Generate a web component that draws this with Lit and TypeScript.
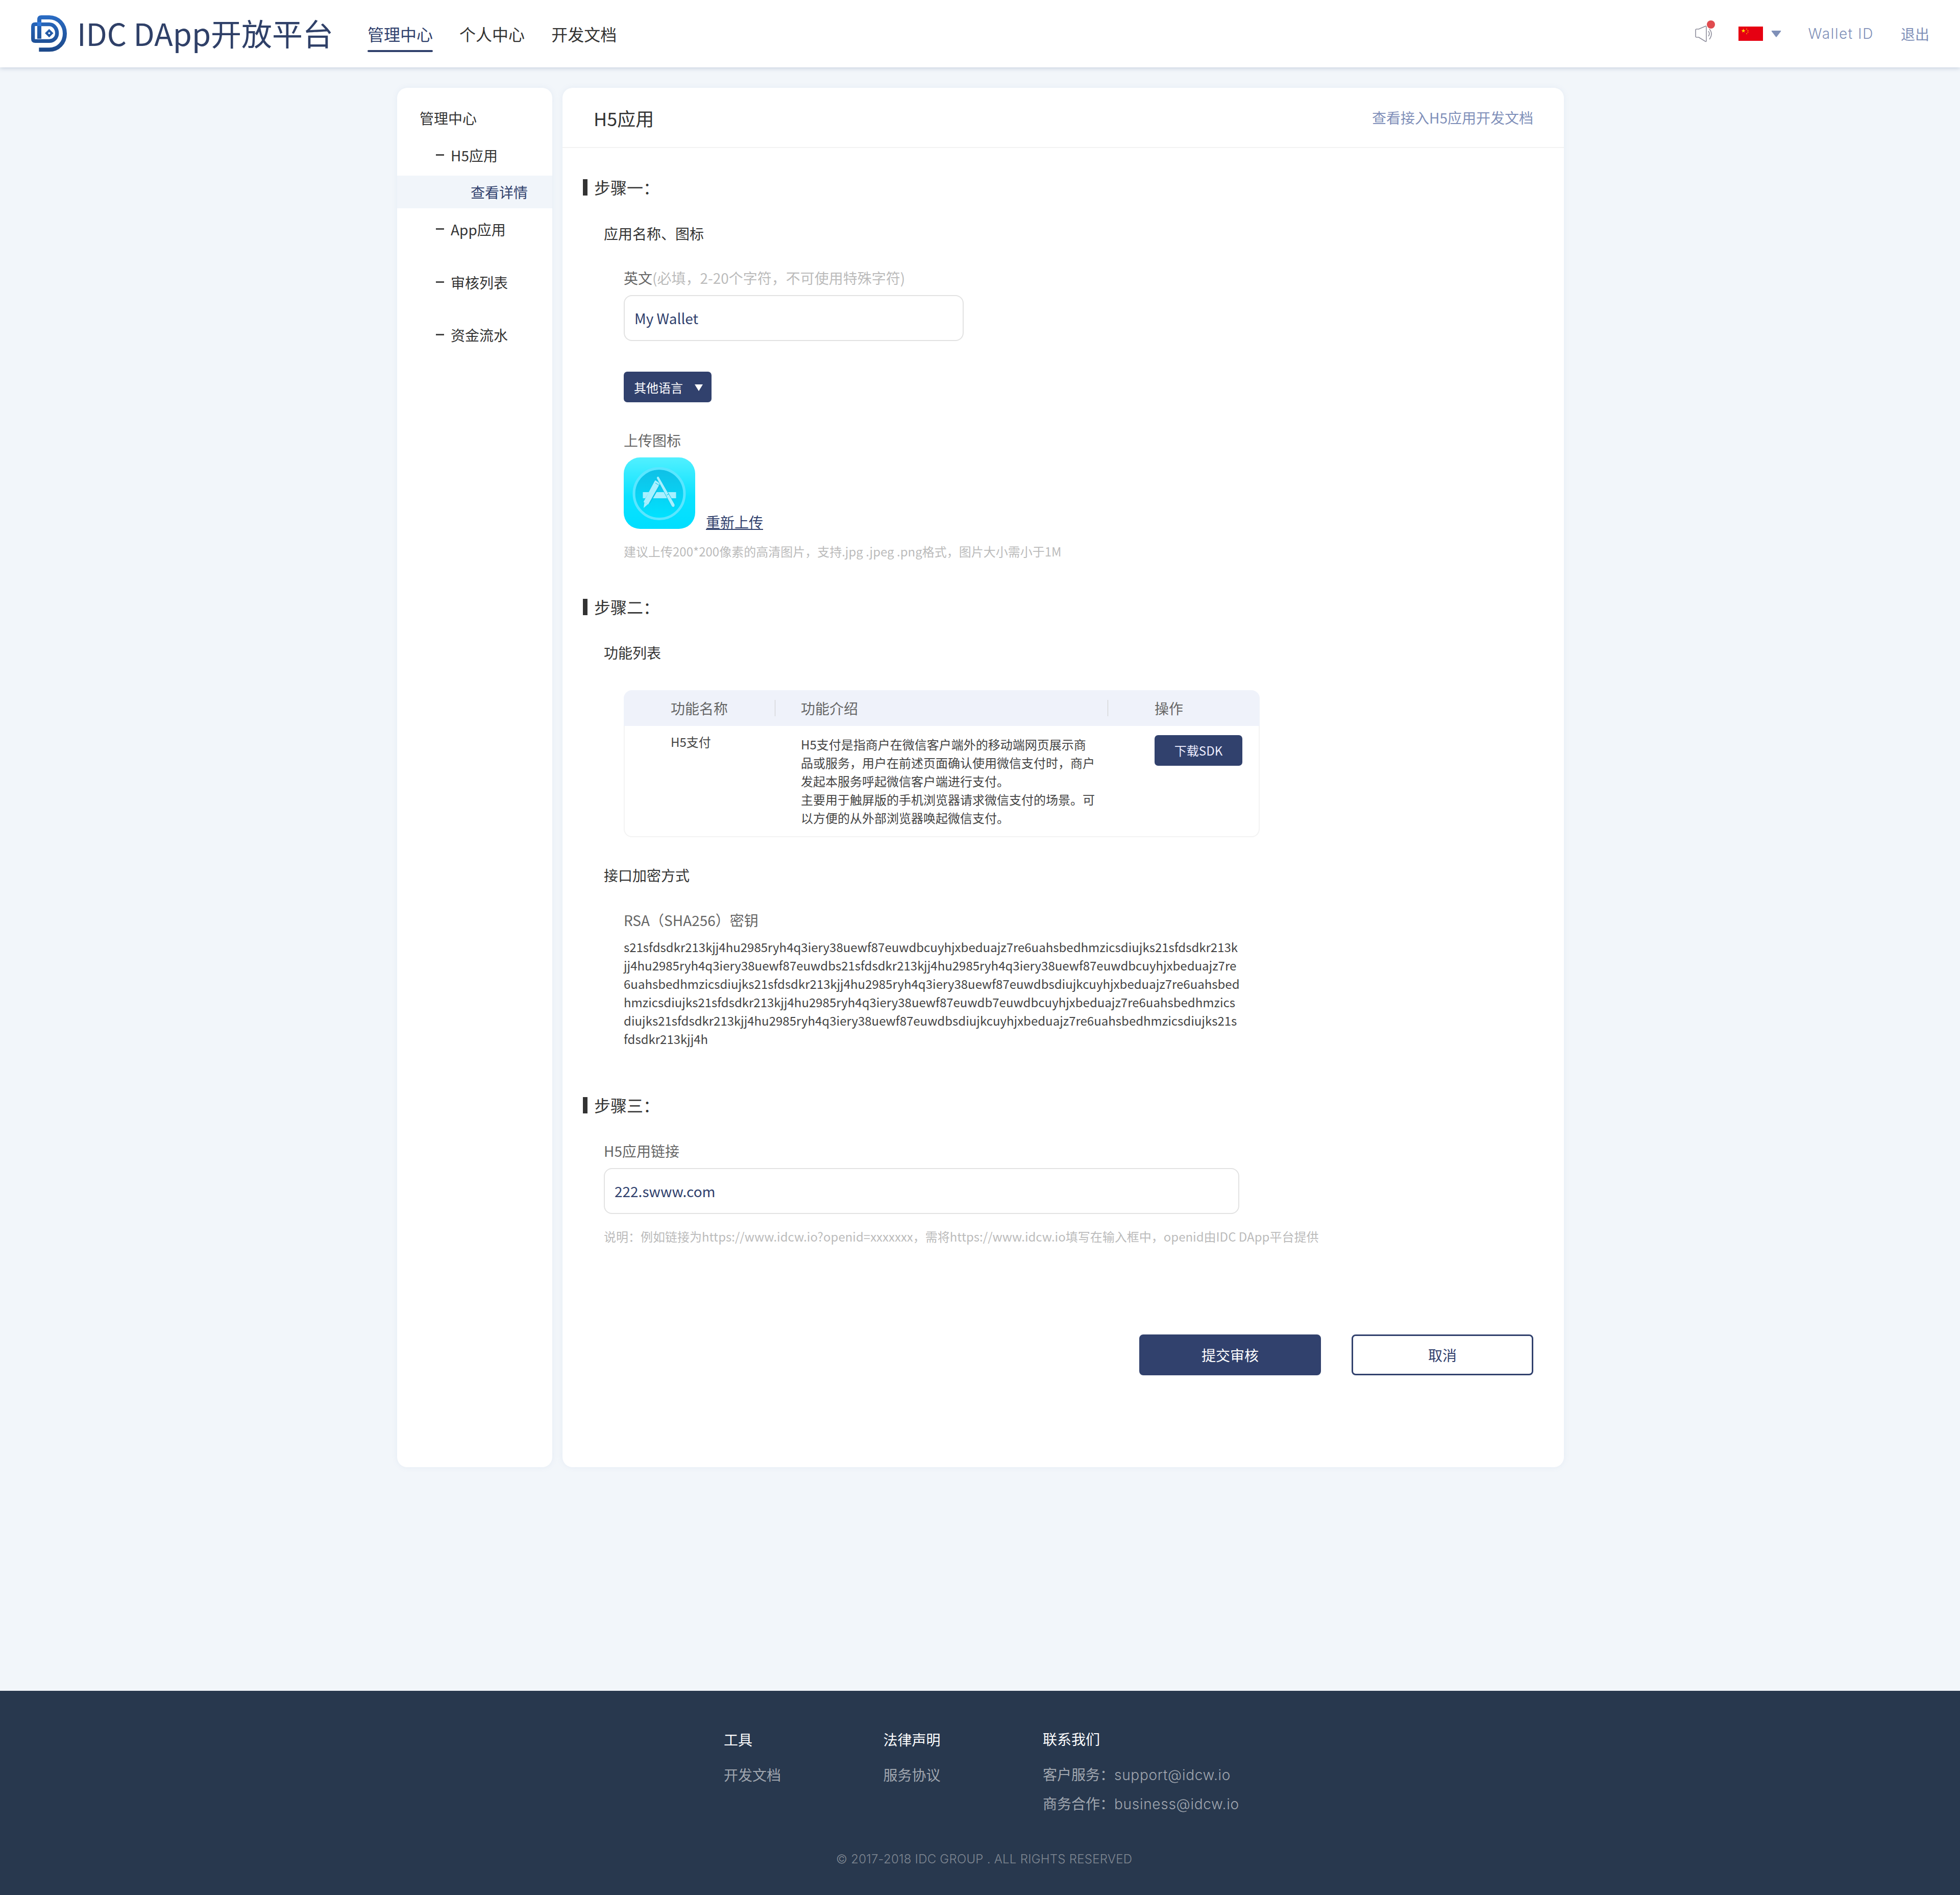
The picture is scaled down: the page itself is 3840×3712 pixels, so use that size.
import { LitElement, html, css } from "lit";
import { customElement } from "lit/decorators.js";

const KEY_LINES = [
  "s21sfdsdkr213kjj4hu2985ryh4q3iery38uewf87euwdbcuyhjxbeduajz7re6uahsbedhmzicsdiujks21sfdsdkr213k",
  "jj4hu2985ryh4q3iery38uewf87euwdbs21sfdsdkr213kjj4hu2985ryh4q3iery38uewf87euwdbcuyhjxbeduajz7re",
  "6uahsbedhmzicsdiujks21sfdsdkr213kjj4hu2985ryh4q3iery38uewf87euwdbsdiujkcuyhjxbeduajz7re6uahsbed",
  "hmzicsdiujks21sfdsdkr213kjj4hu2985ryh4q3iery38uewf87euwdb7euwdbcuyhjxbeduajz7re6uahsbedhmzics",
  "diujks21sfdsdkr213kjj4hu2985ryh4q3iery38uewf87euwdbsdiujkcuyhjxbeduajz7re6uahsbedhmzicsdiujks21s",
  "fdsdkr213kjj4h",
];
const DESC_LINES = [
  "H5支付是指商户在微信客户端外的移动端网页展示商",
  "品或服务，用户在前述页面确认使用微信支付时，商户",
  "发起本服务呼起微信客户端进行支付。",
  "主要用于触屏版的手机浏览器请求微信支付的场景。可",
  "以方便的从外部浏览器唤起微信支付。",
];

@customElement("app-root")
export class AppRoot extends LitElement {
  static styles = css`
    :host {
      display: flex;
      flex-direction: column;
      min-height: 3712px;
      background: #f2f6fa;
      font-family: "Noto Sans CJK SC", "Noto Sans", sans-serif;
      font-size: 28px;
      font-weight: 400;
      color: #333;
    }
    * { box-sizing: border-box; }
    .header {
      height: 132px;
      background: #fff;
      display: flex;
      align-items: center;
      padding: 0 60px 0 60px;
      box-shadow: 0 2px 8px rgba(90, 110, 150, 0.28);
      position: relative;
    }
    .logo { width: 72px; height: 72px; display: block; }
    .brand { margin: -4px 0 0 19px; font-size: 60px; line-height: 72px; color: #2f4068; white-space: nowrap; }
    .nav { display: flex; gap: 52px; margin-left: 67px; }
    .nav-item { position: relative; line-height: 44px; font-size: 32px; color: #333; }
    .nav-item.active { color: #31416d; }
    .nav-item.active::after {
      content: "";
      position: absolute;
      left: 0; right: 0; bottom: -14px;
      height: 4px;
      border-radius: 2px;
      background: #31416d;
    }
    .head-right { margin-left: auto; display: flex; align-items: center; color: #7f90b8; }
    .speaker { position: relative; width: 36px; height: 36px; }
    .speaker svg { display: block; }
    .dot {
      position: absolute; left: 24px; top: -8px;
      width: 16px; height: 16px; border-radius: 50%;
      background: #e04b4f;
    }
    .flag { display: block; margin-left: 50px; }
    .caret { display: block; margin-left: 16px; }
    .wallet { margin-left: 53px; font-family: Inter, sans-serif; font-weight: 300; letter-spacing: 1.6px; white-space: nowrap; }
    .logout { margin-left: 53px; }

    .page { flex: 1; padding-top: 40px; }
    .wrap { width: 2286px; margin-left: 778px; display: flex; gap: 20px; }
    .card { background: #fff; border-radius: 20px; box-shadow: 0 0 12px rgba(120, 150, 200, 0.1); }
    .side { width: 304px; height: 2702px; padding-top: 27px; }
    .s-row { height: 64px; display: flex; align-items: center; color: #333; white-space: nowrap; }
    .s-title { padding-left: 44px; }
    .s-sub { padding-left: 76px; gap: 13px; }
    .dash { width: 16px; height: 3px; background: #444; display: block; margin-top: -2px; }
    .s-active { background: #f1f5fa; color: #31416d; padding-left: 144px; }
    .mt9 { margin-top: 9px; }
    .mt8 { margin-top: 8px; }
    .mt10 { margin-top: 9px; }
    .mt38 { margin-top: 40px; }
    .mt39 { margin-top: 39px; }

    .main { width: 1962px; height: 2702px; }
    .m-head {
      height: 118px;
      border-bottom: 2px solid #f3f3f3;
      display: flex;
      align-items: center;
      justify-content: space-between;
      padding: 0 60px 0 61px;
    }
    .m-title { font-size: 36px; color: #333; margin-top: 2px; }
    .m-link { color: #7f8fb9; }
    .body { padding: 0 60px 0 40px; }
    .step { display: flex; align-items: center; gap: 13px; font-size: 32px; line-height: 40px; color: #333; }
    .bar { width: 9px; height: 32px; background: #333; display: block; margin-top: 2px; }
    .lv1 { margin-left: 41px; line-height: 40px; color: #333; }
    .lv2 { margin-left: 80px; }
    .line { line-height: 40px; }
    .grey { color: #666; }
    .ph { color: #bbb; }
    .field {
      height: 90px;
      border: 2px solid #e2e2e2;
      border-radius: 16px;
      display: flex;
      align-items: center;
      padding-left: 19px;
      color: #2f3f6d;
    }
    .f1 { width: 666px; margin-top: 14px; }
    .f2 { width: 1245px; margin-top: 14px; margin-left: 41px; }
    .drop {
      width: 172px; height: 60px; margin-top: 60px;
      background: #31416d; color: #fff; border-radius: 7px;
      display: flex; align-items: center;
      padding-left: 20px; font-size: 24px;
    }
    .tri {
      margin: 2px 0 0 23px; width: 0; height: 0;
      border-left: 8px solid transparent;
      border-right: 8px solid transparent;
      border-top: 13px solid #fff;
    }
    .upload { display: flex; align-items: flex-end; gap: 21px; margin-top: 14px; }
    .upload svg { display: block; }
    .re { color: #31416d; text-decoration: underline; line-height: 40px; margin-bottom: -6px; }
    .hint { font-size: 24px; line-height: 36px; color: #bbb; white-space: nowrap; }

    .table { width: 1246px; margin-top: 54px; }
    .t-head, .t-body { display: grid; grid-template-columns: 296px 652px 1fr; }
    .t-head { height: 70px; background: #eff2fa; border-radius: 16px 16px 0 0; align-items: center; color: #666; }
    .t-body { height: 218px; border: 2px solid #f3f3f3; border-top: 0; border-radius: 0 0 16px 16px; font-size: 24px; line-height: 36px; color: #444; margin: 0; }
    .th { line-height: 32px; height: 32px; white-space: nowrap; }
    .th1 { padding-left: 92px; }
    .th2 { padding-left: 50px; border-left: 1px solid #ccc; }
    .th3 { padding-left: 91px; border-left: 1px solid #ccc; }
    .td1 { padding: 13px 0 0 90px; }
    .td2 { padding: 18px 0 0 49px; white-space: nowrap; }
    .td3 { padding: 18px 0 0 90px; }
    .sdk {
      width: 172px; height: 60px; background: #31416d; color: #eef; border-radius: 7px;
      display: flex; align-items: center; justify-content: center; font-size: 24px;
    }
    .key { font-size: 24px; line-height: 36px; color: #444; margin-top: 15px; white-space: nowrap; }

    .actions { display: flex; justify-content: flex-end; gap: 60px; margin-top: 174px; }
    .btn {
      width: 356px; height: 80px; border-radius: 8px;
      display: flex; align-items: center; justify-content: center;
      border: 3px solid #31416d; color: #31416d;
    }
    .btn.pri { background: #31416d; color: #fff; }

    .footer { height: 400px; background: #28384e; color: #a0a6af; position: relative; }
    .f-cols { display: flex; padding: 67px 0 0 1418px; }
    .f-col { width: 312.5px; line-height: 56px; white-space: nowrap; }
    .f-title { color: #fff; margin-bottom: 13px; }
    .tight { margin-top: -1px; }
    .mont { font-family: Inter, sans-serif; font-weight: 300; letter-spacing: 0.7px; }
    .copy {
      margin: 62px 0 0 1638px;
      font-family: Inter, sans-serif; font-weight: 300; letter-spacing: 0.25px;
      font-size: 24px; line-height: 36px; color: #7f8792; white-space: nowrap;
    }
  `;

  private logo() {
    return html`<svg class="logo" viewBox="60 45 214 216">
      <defs>
        <linearGradient id="lg" gradientUnits="userSpaceOnUse" x1="0" y1="45" x2="0" y2="260">
          <stop offset="0" stop-color="#2a6cc4" />
          <stop offset="1" stop-color="#1c4888" />
        </linearGradient>
      </defs>
      <g fill="none" stroke="url(#lg)">
        <path stroke-width="24" d="M110 182V70Q110 57 122 57H168C222 57 260 100 260 152C260 206 222 247 168 247H108" />
        <path stroke-width="22" d="M110 97H86Q73 97 73 110V183Q73 196 86 196H168C195 196 214 176 214 150C214 122 195 98 168 98H122" />
      </g>
      <rect x="98" y="84" width="24" height="24" fill="#2f78dc" />
      <path d="M168 125L193 150L168 175L143 150Z" fill="url(#lg)" />
      <rect x="163" y="145" width="10" height="10" fill="#fff" transform="rotate(45 168 150)" />
    </svg>`;
  }

  private appIcon() {
    return html`<svg width="140" height="140" viewBox="0 0 140 140">
      <defs>
        <linearGradient id="ibg" x1="0" y1="0" x2="0" y2="1">
          <stop offset="0" stop-color="#52f0ff" />
          <stop offset="0.55" stop-color="#0ae2ff" />
          <stop offset="1" stop-color="#00deff" />
        </linearGradient>
        <linearGradient id="idisc" x1="0" y1="0" x2="0" y2="1">
          <stop offset="0" stop-color="#10c0e6" />
          <stop offset="1" stop-color="#00e2ff" />
        </linearGradient>
      </defs>
      <rect width="140" height="140" rx="32" fill="url(#ibg)" />
      <circle cx="69.5" cy="71" r="47" fill="url(#idisc)" />
      <circle cx="69.5" cy="71" r="49.5" fill="none" stroke="#5ae6ff" stroke-width="5" />
      <rect x="37.500" y="68" width="65" height="12" fill="#a8f0ff" />
      <g stroke="#06c4e8" stroke-width="13" stroke-linecap="round" fill="none">
        <path d="M47 85L65 54" />
      </g>
      <path d="M62 46L70 51L47.500 91L40 87Z" fill="#a8f0ff" stroke="#a8f0ff" stroke-width="2" stroke-linejoin="round" />
      <path d="M39 99L40.500 88.500L47 92Z" fill="#a8f0ff" />
      <path d="M66.500 37.500C68 37 69 38 70 40L100 92C101 97 97 99 94 96L64.500 41C64 39.500 65 38 66.500 37.500Z" fill="#a8f0ff" stroke="#08c8ec" stroke-width="1" />
      <path d="M84 74L89 71" stroke="#06c4e8" stroke-width="1" />
      <path d="M62 50L70 55" stroke="#06c4e8" stroke-width="1" />
    </svg>`;
  }

  render() {
    return html`
      <div class="header">
        ${this.logo()}
        <div class="brand">IDC DApp开放平台</div>
        <div class="nav">
          <div class="nav-item active">管理中心</div>
          <div class="nav-item">个人中心</div>
          <div class="nav-item">开发文档</div>
        </div>
        <div class="head-right">
          <div class="speaker">
            <svg width="36" height="36" viewBox="0 0 36 36" fill="none" stroke="#8e8e9c" stroke-width="1.6">
              <path d="M22 3Q23 3 23 5V32Q23 34 21 33L8 25H4Q2 25 2 23V11Q2 9 4 9H8Z" stroke-linejoin="round" />
              <path d="M27 13Q31 18 27 23" />
              <path d="M29 9Q37 18 29 29" />
            </svg>
            <div class="dot"></div>
          </div>
          <svg class="flag" width="48" height="28" viewBox="0 0 48 28">
            <rect width="48" height="28" fill="#e60012" />
            <path d="M9.600 4L10.600 7H13.600L11.200 8.800L12.100 11.800L9.600 10L7.100 11.800L8 8.800L5.600 7H8.600Z" fill="#ffe100" />
            <circle cx="16" cy="5" r="1" fill="#ffb000" />
            <circle cx="18.500" cy="8" r="1" fill="#ffb000" />
            <circle cx="18.500" cy="11" r="1" fill="#ffb000" />
            <circle cx="16" cy="14" r="1" fill="#ffb000" />
          </svg>
          <svg class="caret" width="20" height="13" viewBox="0 0 20 13">
            <path d="M1.500 0H18.500Q20 0 19 1.500L11 12Q10 13 9 12L1 1.500Q0 0 1.500 0Z" fill="#7f90b8" />
          </svg>
          <div class="wallet">Wallet ID</div>
          <div class="logout">退出</div>
        </div>
      </div>

      <div class="page">
        <div class="wrap">
          <div class="card side">
            <div class="s-row s-title">管理中心</div>
            <div class="s-row s-sub mt9"><span class="dash"></span>H5应用</div>
            <div class="s-row s-active mt8">查看详情</div>
            <div class="s-row s-sub mt10"><span class="dash"></span>App应用</div>
            <div class="s-row s-sub mt38"><span class="dash"></span>审核列表</div>
            <div class="s-row s-sub mt39"><span class="dash"></span>资金流水</div>
          </div>

          <div class="card main">
            <div class="m-head">
              <div class="m-title">H5应用</div>
              <div class="m-link">查看接入H5应用开发文档</div>
            </div>
            <div class="body">
              <div class="step" style="margin-top:56px"><span class="bar"></span>步骤一：</div>
              <div class="lv1" style="margin-top:51px">应用名称、图标</div>
              <div class="lv2">
                <div class="line" style="margin-top:47px"><span class="grey">英文</span><span class="ph">(必填，2-20个字符，不可使用特殊字符)</span></div>
                <div class="field f1">My Wallet</div>
                <div class="drop">其他语言<span class="tri"></span></div>
                <div class="line grey" style="margin-top:54px">上传图标</div>
                <div class="upload">${this.appIcon()}<span class="re">重新上传</span></div>
                <div class="hint" style="margin-top:26px">建议上传200*200像素的高清图片，支持.jpg .jpeg .png格式，图片大小需小于1M</div>
              </div>

              <div class="step" style="margin-top:70px"><span class="bar"></span>步骤二：</div>
              <div class="lv1" style="margin-top:50px">功能列表</div>
              <div class="lv2 table">
                <div class="t-head">
                  <div class="th th1">功能名称</div>
                  <div class="th th2">功能介绍</div>
                  <div class="th th3">操作</div>
                </div>
                <div class="t-body">
                  <div class="td1">H5支付</div>
                  <div class="td2">${DESC_LINES.map((l) => html`<div>${l}</div>`)}</div>
                  <div class="td3"><div class="sdk">下载SDK</div></div>
                </div>
              </div>
              <div class="lv1" style="margin-top:54px">接口加密方式</div>
              <div class="lv2">
                <div class="line grey" style="margin-top:48px">RSA（SHA256）密钥</div>
                <div class="key">${KEY_LINES.map((l) => html`<div>${l}</div>`)}</div>
              </div>

              <div class="step" style="margin-top:91px"><span class="bar"></span>步骤三：</div>
              <div class="lv1 grey" style="margin-top:50px">H5应用链接</div>
              <div class="field f2">222.swww.com</div>
              <div class="hint" style="margin:26px 0 0 41px">说明：例如链接为https://www.idcw.io?openid=xxxxxxx，需将https://www.idcw.io填写在输入框中，openid由IDC DApp平台提供</div>

              <div class="actions">
                <div class="btn pri">提交审核</div>
                <div class="btn">取消</div>
              </div>
            </div>
          </div>
        </div>
      </div>

      <div class="footer">
        <div class="f-cols">
          <div class="f-col">
            <div class="f-title">工具</div>
            <div>开发文档</div>
          </div>
          <div class="f-col">
            <div class="f-title">法律声明</div>
            <div>服务协议</div>
          </div>
          <div class="f-col">
            <div class="f-title tight">联系我们</div>
            <div>客户服务：<span class="mont">support@idcw.io</span></div>
            <div class="tight">商务合作：<span class="mont">business@idcw.io</span></div>
          </div>
        </div>
        <div class="copy">© 2017-2018 IDC GROUP . ALL RIGHTS RESERVED</div>
      </div>
    `;
  }
}
